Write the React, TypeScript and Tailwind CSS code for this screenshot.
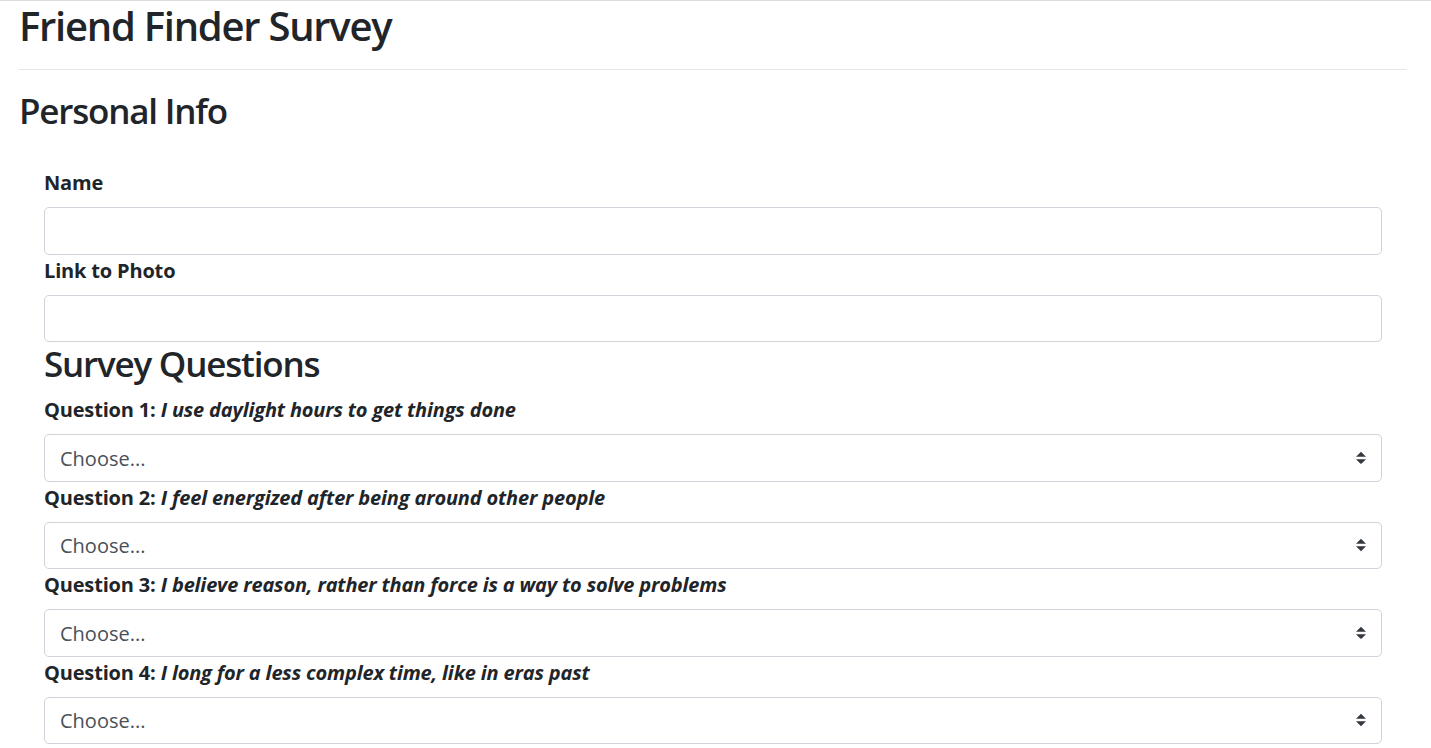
import React from 'react';

const questions = [
  'I use daylight hours to get things done',
  'I feel energized after being around other people',
  'I believe reason, rather than force is a way to solve problems',
  'I long for a less complex time, like in eras past',
];

function SelectArrow() {
  return (
    <svg
      className="pointer-events-none absolute right-[16px] top-1/2 -translate-y-1/2"
      width="10"
      height="12.5"
      viewBox="0 0 4 5"
    >
      <path fill="#343a40" d="M2 0L0 2h4zm0 5L0 3h4z" />
    </svg>
  );
}

function Field({ label }: { label: string }) {
  return (
    <div>
      <label className="mb-[10px] block pt-[1px] text-[20px] font-bold leading-[29px] tracking-[-0.17px]">{label}</label>
      <input
        type="text"
        className="block h-[47.5px] w-full rounded-[5px] border border-[#ced4da] bg-white px-[15px] text-[20px] text-[#495057] outline-none"
      />
    </div>
  );
}

function Question({ n, text }: { n: number; text: string }) {
  return (
    <div>
      <label className="mb-[10px] block pt-[1px] text-[20px] font-bold leading-[29px] tracking-[-0.17px]">
        Question {n}: <em className="italic">{text}</em>
      </label>
      <div className="relative">
        <select
          defaultValue=""
          className="block h-[47.5px] w-full appearance-none rounded-[5px] border border-[#ced4da] bg-white pl-[15px] pr-[40px] pt-[2px] text-[20px] leading-[30px] text-[#495057] outline-none"
        >
          <option value="">Choose...</option>
          <option value="1">1 (Strongly Disagree)</option>
          <option value="2">2</option>
          <option value="3">3</option>
          <option value="4">4</option>
          <option value="5">5 (Strongly Agree)</option>
        </select>
        <SelectArrow />
      </div>
    </div>
  );
}

export default function App() {
  return (
    <div
      className="min-h-screen border-t border-[#dcdcdc] bg-white text-[#212529]"
      style={{ fontFamily: '"Open Sans", "Noto Sans", sans-serif' }}
    >
      <div className="pl-[19px] pr-[24px]">
        <h1 className="mt-[1px] text-[40px] font-semibold leading-[48px] tracking-[-1.25px]">Friend Finder Survey</h1>
        <hr className="mt-[19px] border-t border-[#e6e6e6]" />
        <h2 className="mt-[20px] text-[35px] font-semibold leading-[42px] tracking-[-1.2px]">Personal Info</h2>

        <form className="mx-[25px] mt-[35px]">
          <Field label="Name" />
          <Field label="Link to Photo" />
          <h3 className="mb-[10px] pt-[1px] text-[35px] font-semibold leading-[41px] tracking-[-1.2px]">Survey Questions</h3>
          {questions.map((q, i) => (
            <Question key={i} n={i + 1} text={q} />
          ))}
        </form>
      </div>
    </div>
  );
}
